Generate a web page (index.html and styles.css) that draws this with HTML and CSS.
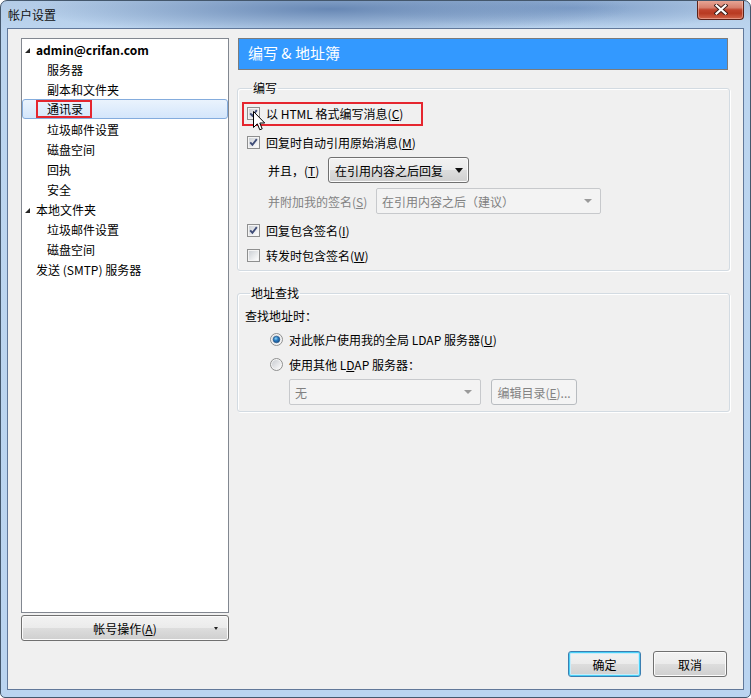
FILE: index.html
```html
<!DOCTYPE html>
<html lang="zh-CN">
<head>
<meta charset="utf-8">
<title>帐户设置</title>
<link rel="stylesheet" href="styles.css">
</head>
<body>
<svg class="defs" width="0" height="0" aria-hidden="true">
  <defs>
    <linearGradient id="cbfill" x1="0" y1="0" x2="1" y2="1">
      <stop offset="0" stop-color="#cdd1d6"/>
      <stop offset="1" stop-color="#fdfdfd"/>
    </linearGradient>
    <linearGradient id="rdfill" x1="0" y1="0" x2="1" y2="1">
      <stop offset="0" stop-color="#c9ccd1"/>
      <stop offset="1" stop-color="#fbfbfb"/>
    </linearGradient>
    <radialGradient id="rddot" cx="0.4" cy="0.35" r="0.7">
      <stop offset="0" stop-color="#8fd6f7"/>
      <stop offset="0.45" stop-color="#2a7cc2"/>
      <stop offset="1" stop-color="#174c86"/>
    </radialGradient>
  </defs>
</svg>
<div class="window">
  <div class="titlebar">
    <span class="title">帐户设置</span>
    <div class="close">
      <svg width="14" height="11" viewBox="0 0 14 11">
        <path d="M2.5 1.5 L11.5 9.5 M11.5 1.5 L2.5 9.5" stroke="#3b1c18" stroke-width="4" stroke-linecap="square"/>
        <path d="M2.5 1.5 L11.5 9.5 M11.5 1.5 L2.5 9.5" stroke="#ffffff" stroke-width="2.2" stroke-linecap="square"/>
      </svg>
    </div>
  </div>
  <div class="client">
    <div class="main">
      <div class="leftcol">
        <div class="tree">
          <div class="node parent bold"><span class="tri"></span>admin@crifan.com</div>
          <div class="node child">服务器</div>
          <div class="node child">副本和文件夹</div>
          <div class="node sel"><span class="redbox">通讯录</span></div>
          <div class="node child">垃圾邮件设置</div>
          <div class="node child">磁盘空间</div>
          <div class="node child">回执</div>
          <div class="node child">安全</div>
          <div class="node parent"><span class="tri"></span>本地文件夹</div>
          <div class="node child">垃圾邮件设置</div>
          <div class="node child">磁盘空间</div>
          <div class="node root">发送 (SMTP) 服务器</div>
        </div>
        <div class="btn acctbtn"><span>帐号操作(<u>A</u>)</span><span class="minidown"></span></div>
      </div>
      <div class="rightcol">
        <div class="header">编写 &amp; 地址簿</div>
        <fieldset class="group g1">
          <legend>编写</legend>
          <div class="row r1">
            <svg class="cb" width="13" height="13" viewBox="0 0 13 13"><rect x="0.5" y="0.5" width="12" height="12" fill="#f4f4f4" stroke="#8e8f8f"/><rect x="2" y="2" width="9" height="9" fill="url(#cbfill)"/><path d="M3.2 6.3 L5.4 8.8 L9.8 3.2" fill="none" stroke="#3f4d78" stroke-width="1.9"/></svg>
            <span class="lbl">以 HTML 格式编写消息(<u>C</u>)</span>
            <svg class="cursor" width="13" height="21" viewBox="0 0 13 21"><path d="M0.5 0.5 L0.5 16.5 L4.3 12.8 L6.8 18.8 L9.2 17.8 L6.8 12 L11.7 12 Z" fill="#ffffff" stroke="#000000" stroke-width="1" stroke-linejoin="miter"/></svg>
          </div>
          <div class="row r2">
            <svg class="cb" width="13" height="13" viewBox="0 0 13 13"><rect x="0.5" y="0.5" width="12" height="12" fill="#f4f4f4" stroke="#8e8f8f"/><rect x="2" y="2" width="9" height="9" fill="url(#cbfill)"/><path d="M3.2 6.3 L5.4 8.8 L9.8 3.2" fill="none" stroke="#3f4d78" stroke-width="1.9"/></svg>
            <span class="lbl">回复时自动引用原始消息(<u>M</u>)</span>
          </div>
          <div class="row r3 indent">
            <span class="flbl w1">并且，(<u>T</u>)</span>
            <div class="combo"><span>在引用内容之后回复</span><span class="down"></span></div>
          </div>
          <div class="row r4 indent">
            <span class="flbl w2 dis">并附加我的签名(<u>S</u>)</span>
            <div class="dcombo wide"><span>在引用内容之后（建议）</span><span class="down gray"></span></div>
          </div>
          <div class="row r5">
            <svg class="cb" width="13" height="13" viewBox="0 0 13 13"><rect x="0.5" y="0.5" width="12" height="12" fill="#f4f4f4" stroke="#8e8f8f"/><rect x="2" y="2" width="9" height="9" fill="url(#cbfill)"/><path d="M3.2 6.3 L5.4 8.8 L9.8 3.2" fill="none" stroke="#3f4d78" stroke-width="1.9"/></svg>
            <span class="lbl">回复包含签名(<u>I</u>)</span>
          </div>
          <div class="row r6">
            <svg class="cb" width="13" height="13" viewBox="0 0 13 13"><rect x="0.5" y="0.5" width="12" height="12" fill="#f4f4f4" stroke="#8e8f8f"/><rect x="2" y="2" width="9" height="9" fill="url(#cbfill)"/></svg>
            <span class="lbl">转发时包含签名(<u>W</u>)</span>
          </div>
        </fieldset>
        <fieldset class="group g2">
          <legend>地址查找</legend>
          <div class="row q0">查找地址时：</div>
          <div class="row q1">
            <svg class="rd" width="13" height="13" viewBox="0 0 13 13"><circle cx="6.5" cy="6.5" r="6" fill="#f4f4f4" stroke="#8e8f8f"/><circle cx="6.5" cy="6.5" r="4.6" fill="url(#rdfill)"/><circle cx="6.5" cy="6.5" r="3.3" fill="url(#rddot)" stroke="#1d4f80" stroke-width="0.6"/></svg>
            <span class="lbl">对此帐户使用我的全局 LDAP 服务器(<u>U</u>)</span>
          </div>
          <div class="row q2">
            <svg class="rd" width="13" height="13" viewBox="0 0 13 13"><circle cx="6.5" cy="6.5" r="6" fill="#f4f4f4" stroke="#8e8f8f"/><circle cx="6.5" cy="6.5" r="4.6" fill="url(#rdfill)"/></svg>
            <span class="lbl">使用其他 L<u>D</u>AP 服务器：</span>
          </div>
          <div class="row q3">
            <div class="dcombo none"><span>无</span><span class="down gray"></span></div>
            <div class="dbtn">编辑目录(<u>E</u>)...</div>
          </div>
        </fieldset>
      </div>
    </div>
    <div class="footer">
      <div class="btn okbtn">确定</div>
      <div class="btn cancelbtn">取消</div>
    </div>
  </div>
</div>
</body>
</html>
```

FILE: styles.css
```css
* { box-sizing: border-box; }
html, body { margin: 0; padding: 0; }
body {
  width: 751px;
  height: 698px;
  overflow: hidden;
  background: #ffffff;
  font-family: "Noto Sans CJK SC", "Noto Sans", sans-serif;
  font-size: 12px;
  color: #000;
}
u { text-decoration: underline; text-underline-offset: 1px; }
.defs { position: absolute; width: 0; height: 0; overflow: hidden; }

.window {
  width: 751px;
  height: 698px;
  border: 1px solid #44576c;
  border-radius: 7px 7px 5px 5px;
  overflow: hidden;
  display: flex;
  flex-direction: column;
  background:
    radial-gradient(ellipse 300px 26px at 330px 8px, rgba(95,128,175,0.9), rgba(95,128,175,0) 100%),
    radial-gradient(ellipse 210px 20px at 570px 7px, rgba(105,140,188,0.7), rgba(105,140,188,0) 100%),
    linear-gradient(to bottom, #b3cbe6 0px, #bcd5ef 30px, #bad4f0 100%);
}
.titlebar {
  height: 27px;
  flex: none;
  display: flex;
  justify-content: space-between;
  align-items: flex-start;
  padding: 0 6px 0 7px;
}
.title {
  margin-top: 6px;
  line-height: 16px;
  font-size: 12px;
  color: #111;
}
.close {
  width: 47px;
  height: 20px;
  margin-top: -1px;
  border: 1px solid #5c2219;
  border-top: none;
  border-radius: 0 0 4px 4px;
  background: linear-gradient(to bottom, #e9aa9a 0%, #d77f6d 40%, #c0432d 52%, #b83a22 70%, #d2654b 100%);
  box-shadow: inset 0 0 0 1px rgba(255, 210, 200, 0.45);
  display: flex;
  align-items: center;
  justify-content: center;
}

.client {
  margin: 0 6px;
  height: 662px;
  border: 1px solid #61789a;
  background: #f0f0f0;
  padding: 9px 13px 12px 13px;
  display: flex;
  flex-direction: column;
  flex: none;
}
.main {
  height: 603px;
  display: flex;
  gap: 8px;
  flex: none;
}
.leftcol {
  width: 208px;
  display: flex;
  flex-direction: column;
}
.tree {
  height: 575px;
  border: 1px solid #828790;
  background: #ffffff;
}
.node {
  height: 20px;
  display: flex;
  align-items: center;
  white-space: nowrap;
}
.node.parent { padding-left: 3px; }
.node.child { padding-left: 25px; }
.node.root { padding-left: 14px; }
.node.bold { font-weight: bold; }
.tri {
  width: 0;
  height: 0;
  border-left: 5px solid transparent;
  border-bottom: 5px solid #262626;
  margin-right: 6px;
  margin-top: 2px;
}
.node.sel {
  border: 1px solid #84acdd;
  border-radius: 3px;
  background: linear-gradient(to bottom, #eaf3fd, #d4e6fb);
  padding-left: 13px;
}
.redbox {
  border: 2px solid #e5262f;
  height: 18px;
  line-height: 14px;
  padding: 0 7px 0 9px;
  display: flex;
  align-items: center;
}

.btn {
  border: 1px solid #707070;
  border-radius: 3px;
  background: linear-gradient(to bottom, #f2f2f2 0%, #ebebeb 50%, #dddddd 51%, #cfcfcf 100%);
  box-shadow: inset 0 0 0 1px #fbfbfb;
  display: flex;
  align-items: center;
  justify-content: center;
}
.acctbtn {
  margin-top: 2px;
  height: 26px;
  position: relative;
  justify-content: center;
}
.minidown {
  position: absolute;
  right: 10px;
  top: 11px;
  width: 0;
  height: 0;
  border-left: 2.5px solid transparent;
  border-right: 2.5px solid transparent;
  border-top: 3px solid #222;
}

.rightcol {
  width: 493px;
  display: flex;
  flex-direction: column;
}
.header {
  height: 32px;
  margin: 0 2px 0 1px;
  border: 1px solid #7c7c7c;
  background: #3399ff;
  color: #ffffff;
  font-size: 15px;
  line-height: 28px;
  padding-left: 9px;
}
.group {
  margin: 0;
  border: 1px solid #d3dbe2;
  border-radius: 3px;
  box-shadow: inset 1px 1px 0 #ffffff, 1px 1px 0 #ffffff;
  min-width: 0;
}
.group legend {
  margin-left: 5px;
  padding: 0 1px;
  line-height: 14px;
  font-size: 12px;
}
.g1 { margin-top: 11px; padding: 0 0 5px 9px; }
.g2 { margin-top: 15px; padding: 0 0 6px 7px; }

.row {
  display: flex;
  align-items: center;
  white-space: nowrap;
}
.cb { flex: none; }
.lbl { margin-left: 6px; }
.r1 {
  width: 181px;
  margin-top: 7px;
  margin-left: -5px;
  border: 2px solid #e5262f;
  padding: 0 0 2px 3px;
  height: 24px;
  position: relative;
}
.cursor {
  position: absolute;
  left: 9px;
  top: 7px;
}
.r2 { margin-top: 6px; height: 20px; }
.r3 { margin-top: 5px; height: 26px; }
.r4 { margin-top: 5px; height: 26px; }
.r5 { margin-top: 6px; height: 20px; }
.r6 { margin-top: 5px; height: 20px; }
.indent { padding-left: 21px; }
.flbl.w1 { width: 60px; }
.flbl.w2 { width: 108px; }
.dis { color: #838383; }

.combo {
  width: 141px;
  height: 26px;
  border: 1px solid #707070;
  border-radius: 3px;
  background: linear-gradient(to bottom, #f2f2f2 0%, #ebebeb 50%, #dddddd 51%, #cfcfcf 100%);
  box-shadow: inset 0 0 0 1px #fbfbfb;
  display: flex;
  align-items: center;
  justify-content: space-between;
  padding: 0 5px 0 6px;
}
.down {
  width: 0;
  height: 0;
  border-left: 4px solid transparent;
  border-right: 4px solid transparent;
  border-top: 5px solid #111;
}
.down.gray { border-top-color: #9a9a9a; border-top-width: 4px; }
.dcombo {
  height: 26px;
  border: 1px solid #c7c9cc;
  border-radius: 2px;
  background: #f3f3f3;
  color: #808080;
  display: flex;
  align-items: center;
  justify-content: space-between;
  padding: 0 8px 0 5px;
}
.dcombo.wide { width: 225px; }
.dcombo.none { width: 192px; margin-left: 44px; }

.q0 { margin-top: 6px; height: 18px; }
.q1 { margin-top: 5px; height: 20px; padding-left: 25px; }
.q2 { margin-top: 5px; height: 20px; padding-left: 25px; }
.q3 { margin-top: 5px; height: 26px; }
.rd { flex: none; }
.dbtn {
  margin-left: 10px;
  width: 86px;
  height: 26px;
  border: 1px solid #b8bcc0;
  border-radius: 3px;
  background: #f4f4f4;
  color: #838383;
  display: flex;
  align-items: center;
  justify-content: center;
}

.footer {
  margin-top: 10px;
  height: 26px;
  display: flex;
  justify-content: flex-end;
  gap: 12px;
  padding-right: 3px;
  flex: none;
}
.okbtn {
  width: 73px;
  border-color: #3c7fb1;
  box-shadow: inset 0 0 0 1px #48d0f7, inset 0 0 0 2px #c8ecfa;
}
.cancelbtn { width: 74px; }
```
